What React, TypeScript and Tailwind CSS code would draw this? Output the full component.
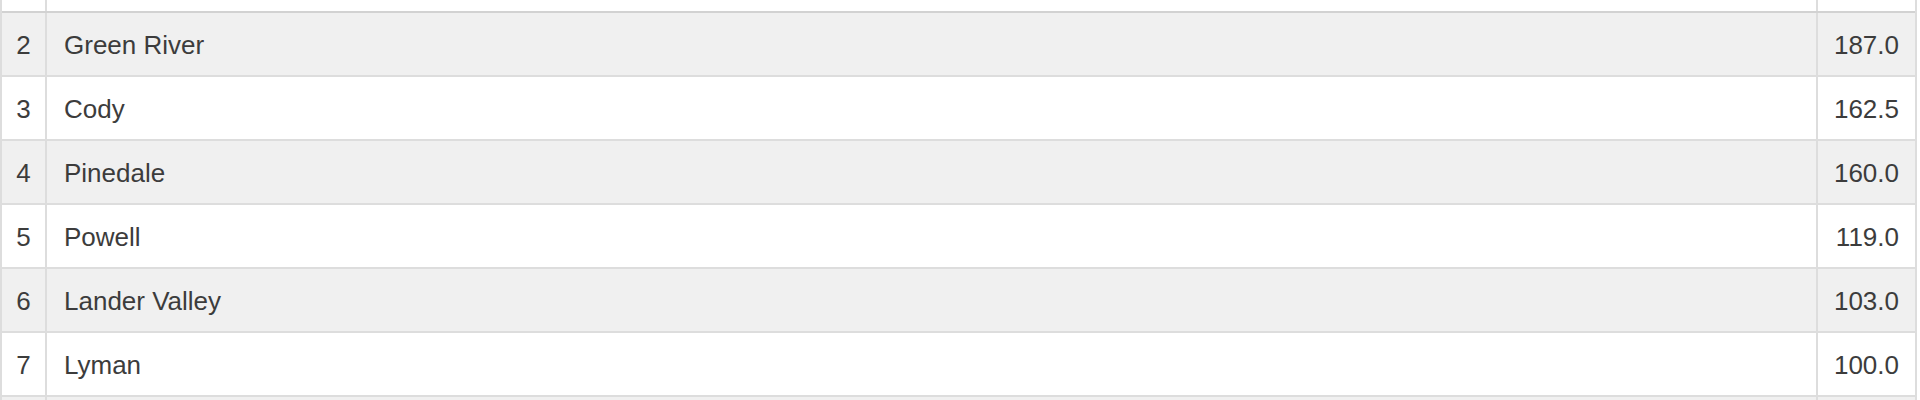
const rows = [
    { rank: 2, name: "Green River", score: "187.0" },
    { rank: 3, name: "Cody", score: "162.5" },
    { rank: 4, name: "Pinedale", score: "160.0" },
    { rank: 5, name: "Powell", score: "119.0" },
    { rank: 6, name: "Lander Valley", score: "103.0" },
    { rank: 7, name: "Lyman", score: "100.0" },
]

export default function App () {
    return (
        <div className="bg-white h-[400px] overflow-hidden" style={{ fontFamily: '"Liberation Sans", Arial, Helvetica, sans-serif' }}>
            <div className="w-[1917px] border-x-2 border-[#dddddd] text-[26px] text-[#3c3c3c]">
                <div className="flex h-[13px] border-b-2 border-[#d2d2d2]">
                    <div className="w-[45px] border-r-2 border-[#dddddd]" />
                    <div className="flex-1 border-r-2 border-[#dddddd]" />
                    <div className="w-[97px]" />
                </div>
                {rows.map(row => (
                    <Row key={row.rank} {...row} />
                ))}
                {/* next row, only its top edge shows */}
                <div className="flex h-[64px] bg-[#f0f0f0]">
                    <div className="w-[45px] border-r-2 border-[#dddddd]" />
                    <div className="flex-1 border-r-2 border-[#dddddd]" />
                    <div className="w-[97px]" />
                </div>
            </div>
        </div>
    )
}

function Row (props: { rank: number, name: string, score: string }) {
    const even = props.rank % 2 === 0
    return (
        <div className={even ? "flex h-[64px] border-b-2 border-[#dddddd] bg-[#f0f0f0]" : "flex h-[64px] border-b-2 border-[#dddddd] bg-white"}>
            <div className="w-[45px] flex items-center justify-center pt-[2px] border-r-2 border-[#dddddd]">{props.rank}</div>
            <div className="flex-1 flex items-center pl-[17px] pr-4 pt-[2px] border-r-2 border-[#dddddd]">{props.name}</div>
            <div className="w-[97px] flex items-center justify-end px-4 pt-[2px]">{props.score}</div>
        </div>
    )
}
